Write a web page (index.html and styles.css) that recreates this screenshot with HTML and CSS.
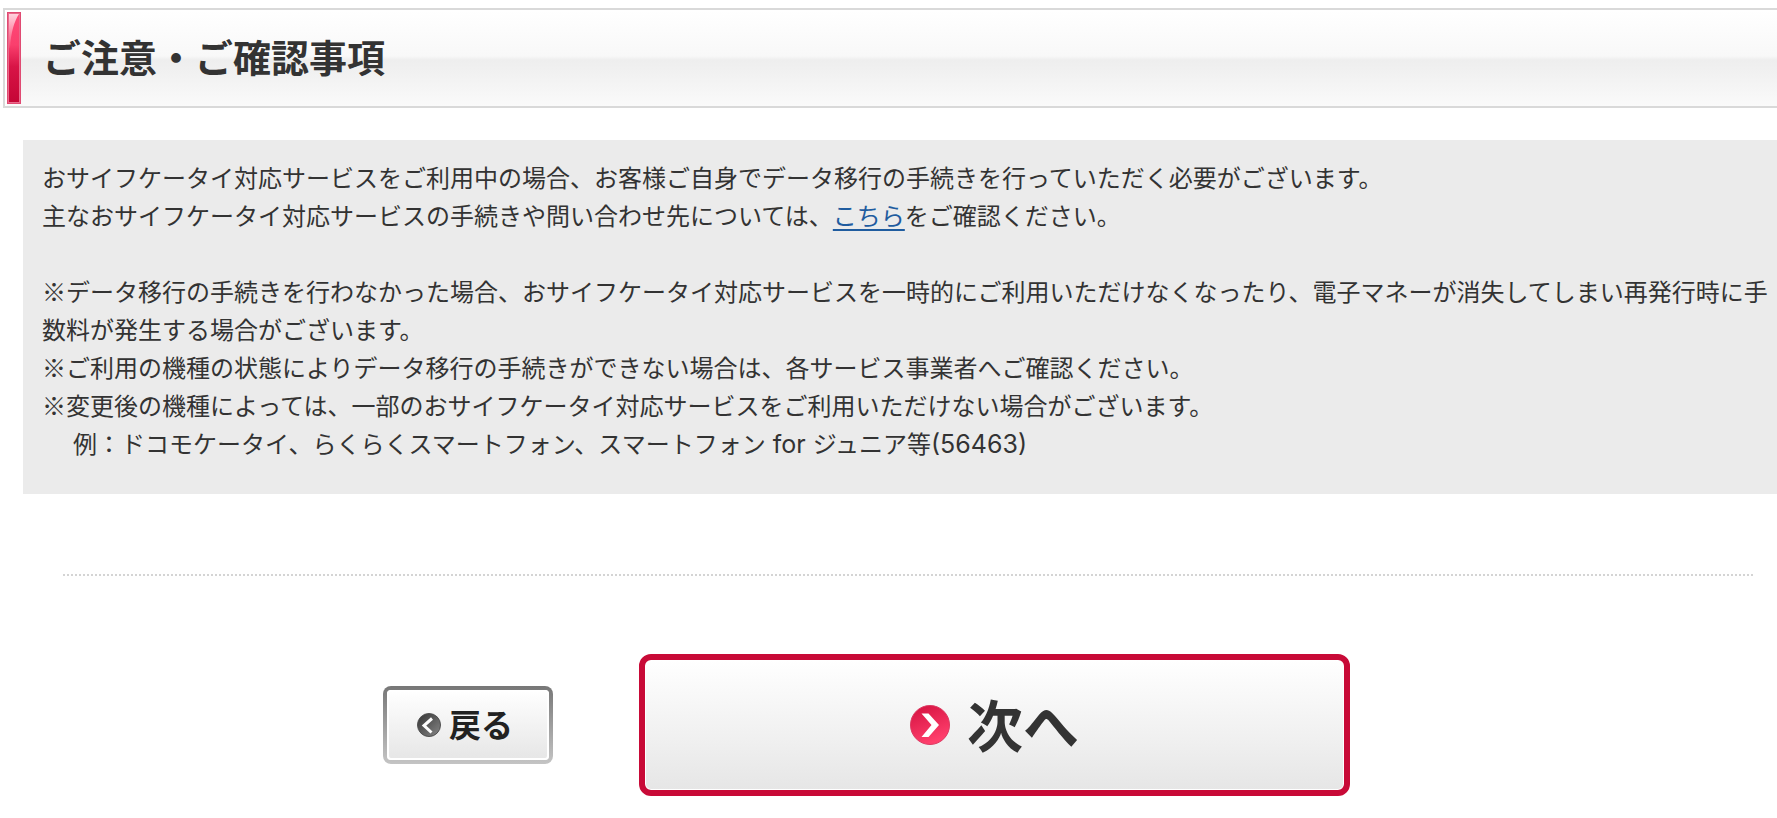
FILE: index.html
```html
<!DOCTYPE html>
<html lang="ja">
<head>
<meta charset="utf-8">
<meta name="viewport" content="width=device-width, initial-scale=1">
<title>ご注意・ご確認事項</title>
<link rel="stylesheet" href="styles.css">
</head>
<body>
<main>
  <header class="section-head">
    <svg class="section-mark" viewBox="0 0 14 92" preserveAspectRatio="none" aria-hidden="true">
      <defs>
        <linearGradient id="bar" x1="0" y1="0" x2="0" y2="1">
          <stop offset="0" stop-color="#ff4a78"/>
          <stop offset=".35" stop-color="#fa3f6d"/>
          <stop offset=".6" stop-color="#d81446"/>
          <stop offset="1" stop-color="#c50636"/>
        </linearGradient>
        <linearGradient id="shine" x1="0" y1="0" x2="0" y2="1">
          <stop offset="0" stop-color="#fff" stop-opacity=".75"/>
          <stop offset="1" stop-color="#fff" stop-opacity=".05"/>
        </linearGradient>
      </defs>
      <rect width="14" height="92" fill="#e04a72"/>
      <rect x="1" y="1" width="12" height="90" fill="#ea6a8b"/>
      <rect x="2" y="2" width="10" height="88" fill="url(#bar)"/>
      <path d="M2 2H12C7 10 4 20 3 36H2Z" fill="url(#shine)"/>
    </svg>
    <h1 class="section-title">ご注意・ご確認事項</h1>
  </header>

  <section class="notice">
    <p>おサイフケータイ対応サービスをご利用中の場合、お客様ご自身でデータ移行の手続きを行っていただく必要がございます。<br>
    主なおサイフケータイ対応サービスの手続きや問い合わせ先については、<a href="#">こちら</a>をご確認ください。</p>
    <ul class="notes">
      <li>※データ移行の手続きを行わなかった場合、おサイフケータイ対応サービスを一時的にご利用いただけなくなったり、電子マネーが消失してしまい再発行時に手数料が発生する場合がございます。</li>
      <li>※ご利用の機種の状態によりデータ移行の手続きができない場合は、各サービス事業者へご確認ください。</li>
      <li>※変更後の機種によっては、一部のおサイフケータイ対応サービスをご利用いただけない場合がございます。</li>
      <li class="example">例：ドコモケータイ、らくらくスマートフォン、スマートフォン<span class="latin"> for </span>ジュニア等<span class="latin">(56463)</span></li>
    </ul>
  </section>

  <hr class="divider">

  <div class="actions">
    <button type="button" class="btn btn-back">
      <svg class="icon-back" viewBox="0 0 24 24" aria-hidden="true">
        <defs>
          <linearGradient id="grey" x1="0" y1="0" x2="1" y2="1">
            <stop offset="0" stop-color="#333"/>
            <stop offset="1" stop-color="#888"/>
          </linearGradient>
        </defs>
        <circle cx="12" cy="12" r="11.5" fill="url(#grey)" stroke="#505050"/>
        <path d="M15 5.500 7 12.500 14.500 19.500" fill="none" stroke="#fff" stroke-width="3"/>
      </svg>
      <span class="btn-label">戻る</span>
    </button>
    <button type="button" class="btn btn-next">
      <svg class="icon-next" viewBox="0 0 40 40" aria-hidden="true">
        <defs>
          <linearGradient id="red" x1="0" y1="0" x2=".4" y2="1">
            <stop offset="0" stop-color="#d3103f"/>
            <stop offset="1" stop-color="#ff3f6c"/>
          </linearGradient>
        </defs>
        <circle cx="20" cy="20" r="19.500" fill="url(#red)" stroke="#dc3a62"/>
        <path d="M11.500 8.500H18.500L29 20 18.500 32H11.500L21.500 20Z" fill="#fff"/>
      </svg>
      <span class="btn-label">次へ</span>
    </button>
  </div>
</main>
</body>
</html>
```
FILE: styles.css
```css
* {
  box-sizing: border-box;
}

body {
  margin: 0;
  padding: 8px 0 22px;
  background: #fff;
  color: #333;
  font-family: "Noto Sans CJK JP", sans-serif;
  font-size: 24px;
  line-height: 38px;
}

.section-head {
  display: flex;
  align-items: center;
  gap: 22px;
  min-height: 100px;
  margin-left: 3px;
  padding: 2px;
  border: 2px solid #d9d9d9;
  border-right: 0;
  background: linear-gradient(#fff, #f8f8f8 48%, #eee 52%, #f1f1f1 66%, #fafafa);
  box-shadow: inset 2px 2px #fff;
}

.section-mark {
  align-self: stretch;
  flex: none;
  width: 14px;
  height: 92px;
}

.section-title {
  margin: 0;
  padding-bottom: 4px;
  font-size: 38px;
  line-height: 56px;
  font-weight: 700;
}

.notice {
  margin: 32px 0 0 23px;
  padding: 18px 4px 32px 19px;
  background: #ebebeb;
}

.notice p {
  margin: 0 0 38px;
}

.notice a {
  color: #1f5c9f;
  text-decoration-thickness: 2px;
  text-underline-offset: 4px;
}

.notes {
  margin: 0;
  padding: 0;
  list-style: none;
}

.example {
  padding-left: 31px;
}

.latin {
  font-family: Inter, sans-serif;
  font-size: 25px;
  line-height: 1;
  white-space: pre-wrap;
}

.divider {
  height: 2px;
  margin: 80px 23px 78px 63px;
  border: 0;
  background: repeating-linear-gradient(90deg, #d4d4d4 0 2px, #fff 2px 4px);
}

.actions {
  display: flex;
  justify-content: center;
  align-items: center;
  gap: 86px;
  padding-right: 44px;
}

.btn {
  display: flex;
  justify-content: center;
  align-items: center;
  color: #333;
  font-family: inherit;
  font-weight: 700;
  cursor: pointer;
}

.btn-label {
  padding-bottom: 4px;
}

.btn-back {
  gap: 8px;
  width: 170px;
  height: 78px;
  padding: 0 6px 0 0;
  border: 4px solid transparent;
  border-radius: 8px;
  background:
    linear-gradient(#fff, #e6e6e6) padding-box,
    linear-gradient(#777, #c4c4c4) border-box;
  box-shadow: inset 0 0 0 2px #fff;
  color: #222;
  font-size: 32px;
  line-height: 40px;
}

.btn-next {
  gap: 17px;
  width: 711px;
  height: 142px;
  padding: 0;
  border: 6px solid #c80a37;
  border-radius: 12px;
  background: linear-gradient(#fff, #e6e6e6);
  box-shadow: inset 0 0 0 1px #fff;
  font-size: 56px;
  line-height: 64px;
}

.icon-back {
  width: 24px;
  height: 24px;
}

.icon-next {
  width: 40px;
  height: 40px;
}
```
